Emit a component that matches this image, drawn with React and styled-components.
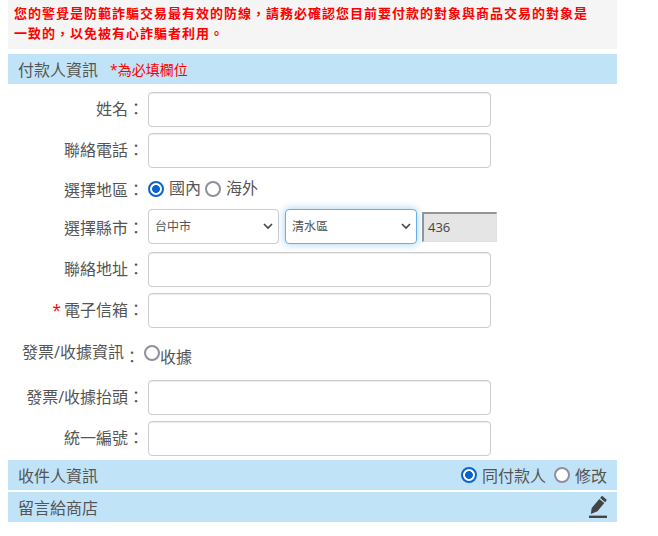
import React from 'react';
import styled, { createGlobalStyle } from 'styled-components';

const GlobalStyle = createGlobalStyle`
	body {
		margin: 0;
		background: #fff;
		font-family: "Open Sans", "Noto Sans CJK TC", sans-serif;
		color: #555;
	}
`;

const Page = styled.div`
	width: 609px;
	margin-left: 8px;
`;

const Notice = styled.div`
	height: 49px;
	box-sizing: border-box;
	padding: 3px 29px 0 6px;
	background: #f5f5f5;
	color: #f00;
	font-size: 13px;
	font-weight: 700;
	letter-spacing: 1px;
	line-height: 20px;
	margin-bottom: 5px;
`;

const SectionBar = styled.div`
	height: 30px;
	margin-bottom: ${props => props.$gap || 0}px;
	padding: 0 10px;
	background: #c1e3f8;
	display: flex;
	align-items: center;
	justify-content: space-between;
	font-size: 16px;
	color: #555;
`;

const BarTitle = styled.div`
	display: flex;
	align-items: center;
`;

const Required = styled.span`
	margin-left: 12px;
	font-size: 14px;
	color: #f00;
`;

const Rows = styled.div`
	padding: 8px 0 4px;
	display: flex;
	flex-direction: column;
`;

const Row = styled.div`
	display: flex;
	align-items: center;
	flex-shrink: 0;
	height: ${props => props.$height || 35}px;
	margin-bottom: ${props => props.$gap ?? 6}px;
`;

const Label = styled.label`
	width: 136px;
	flex-shrink: 0;
	margin-right: 4px;
	padding: ${props => props.$drop || 0}px 0 2px;
	text-align: right;
	font-size: 16px;
	line-height: 24px;
	color: #555;
	white-space: nowrap;
`;

const InvoiceLabel = styled(Label)`
	width: 132px;
	display: flex;
	justify-content: flex-end;
`;

const LowColon = styled.span`
	padding-top: 5px;
`;

const Star = styled.span`
	color: #f00;
	margin-right: 3px;
`;

const TextInput = styled.input`
	width: 343px;
	height: 35px;
	box-sizing: border-box;
	border: 1px solid #ccc;
	border-radius: 4px;
	background: #fff;
	box-shadow: inset 0 1px 1px rgba(0, 0, 0, 0.075);
	outline: none;
`;

const SelectWrap = styled.div`
	position: relative;
	width: ${props => props.$width}px;
	height: 35px;
	margin-right: ${props => props.$gap}px;
	box-sizing: border-box;
	border: 1px solid ${props => (props.$focus ? '#66afe9' : '#ccc')};
	border-radius: 4px;
	background: #fff;
	font-size: 12px;
	line-height: 33px;
	padding-left: 6px;
	color: #555;
	box-shadow: ${props => (props.$focus ? '0 0 8px rgba(102, 175, 233, 0.6)' : 'none')};
`;

const Chevron = styled.svg`
	position: absolute;
	right: 5px;
	top: 13px;
	width: 10px;
	height: 7px;
`;

const ZipInput = styled.div`
	width: 75px;
	height: 30px;
	box-sizing: border-box;
	padding-left: 4px;
	background: #e5e5e5;
	border-top: 2px solid #959595;
	border-left: 2px solid #959595;
	border-right: 1px solid #e0e0e0;
	border-bottom: 1px solid #e0e0e0;
	font-size: 13px;
	line-height: 26px;
	color: #444;
`;

const RadioGroup = styled.div`
	display: flex;
	align-items: center;
	font-size: 16px;
	color: #555;
`;

const RadioText = styled.span`
	padding-top: ${props => props.$drop || 0}px;
	padding-bottom: ${props => props.$lift || 0}px;
`;

const RadioMark = styled.span`
	display: inline-block;
	width: 16px;
	height: 16px;
	box-sizing: border-box;
	border-radius: 50%;
	margin-left: ${props => props.$left ?? 0}px;
	margin-right: ${props => props.$right ?? 5}px;
	margin-bottom: ${props => props.$lift || 0}px;
	border: 2px solid ${props => (props.$on ? '#0b63ce' : '#8f8f9d')};
	background: ${props => (props.$on ? 'radial-gradient(circle, #0b63ce 0 3.6px, #fff 4.2px)' : '#fff')};
`;

const Select = ({ value, width, gap, focus }) => (
	<SelectWrap $width={width} $gap={gap} $focus={focus}>
		{value}
		<Chevron viewBox="0 0 10 7">
			<path d="M1 1l4 4 4-4" fill="none" stroke="#444" strokeWidth="1.6" />
		</Chevron>
	</SelectWrap>
);

const App = () => (
	<Page>
		<GlobalStyle />
		<Notice>
			您的警覺是防範詐騙交易最有效的防線，請務必確認您目前要付款的對象與商品交易的對象是一致的，以免被有心詐騙者利用。
		</Notice>
		<SectionBar>
			<BarTitle>
				付款人資訊<Required>*為必填欄位</Required>
			</BarTitle>
		</SectionBar>
		<Rows>
			<Row><Label>姓名：</Label><TextInput /></Row>
			<Row><Label>聯絡電話：</Label><TextInput /></Row>
			<Row $height={29}>
				<Label $drop={4}>選擇地區：</Label>
				<RadioGroup>
					<RadioMark $on />
					<RadioText $lift={3}>國內</RadioText>
					<RadioMark $left={4} />
					<RadioText $lift={3}>海外</RadioText>
				</RadioGroup>
			</Row>
			<Row $gap={8}>
				<Label $drop={5}>選擇縣市：</Label>
				<Select value="台中市" width={131} gap={6} />
				<Select value="清水區" width={132} gap={5} focus />
				<ZipInput>436</ZipInput>
			</Row>
			<Row><Label>聯絡地址：</Label><TextInput /></Row>
			<Row><Label><Star>*</Star>電子信箱：</Label><TextInput /></Row>
			<Row $height={40}>
				<InvoiceLabel $drop={3}>發票/收據資訊<LowColon>：</LowColon></InvoiceLabel>
				<RadioGroup>
					<RadioMark $right={0} $lift={2} />
					<RadioText $drop={4}>收據</RadioText>
				</RadioGroup>
			</Row>
			<Row><Label>發票/收據抬頭：</Label><TextInput /></Row>
			<Row $gap={0}><Label>統一編號：</Label><TextInput /></Row>
		</Rows>
		<SectionBar $gap={2}>
			<BarTitle>收件人資訊</BarTitle>
			<RadioGroup>
				<RadioMark $on />同付款人<RadioMark $left={8} />修改
			</RadioGroup>
		</SectionBar>
		<SectionBar>
			<BarTitle>留言給商店</BarTitle>
			<svg width="18" height="22" viewBox="0 0 18 22">
				<path d="M0 19.6h18V22H0z" fill="#444" />
				<path d="M13.4 0l3.8 3.2c.5.4.5 1 .1 1.5l-1.2 1.5-5-4.2 1.2-1.5c.3-.4.8-.5 1.1-.5zM10.3 2.9l5 4.2-6.8 8.1L1.8 18l.9-6z" fill="#444" />
			</svg>
		</SectionBar>
	</Page>
);

export default App;
